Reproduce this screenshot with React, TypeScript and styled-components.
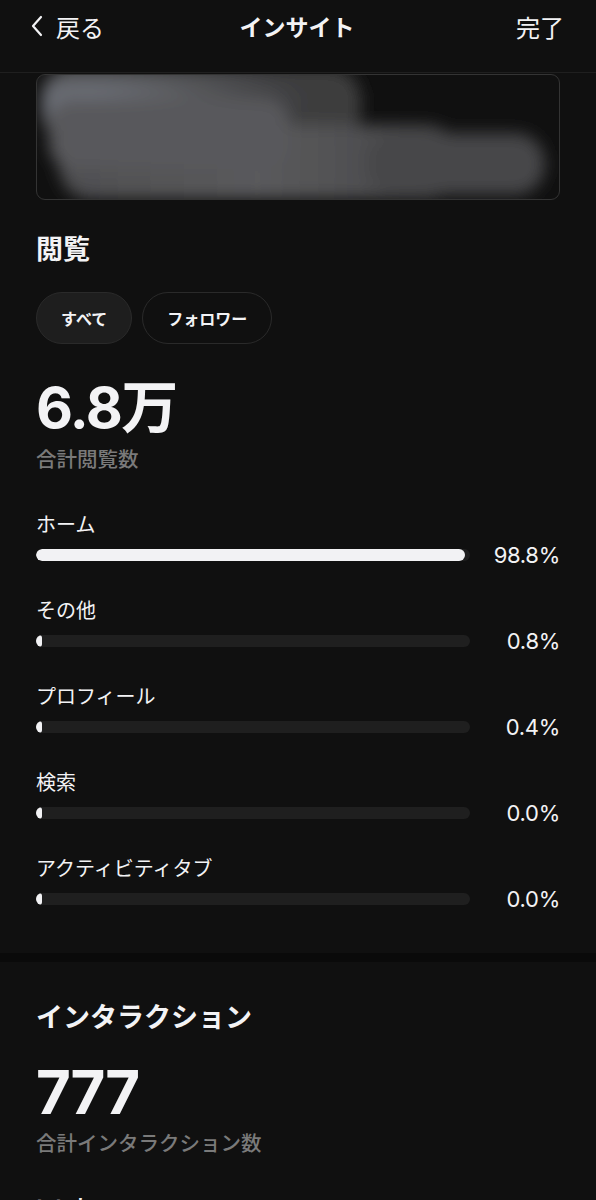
import React from "react";
import styled, { createGlobalStyle } from "styled-components";

const GlobalStyle = createGlobalStyle`
  html, body {
    margin: 0;
    padding: 0;
    background: #101010;
  }
  body {
    font-family: "Noto Sans CJK JP", "Noto Sans", sans-serif;
    color: #f3f3f5;
  }
`;

const Page = styled.div`
  width: 596px;
  height: 1200px;
  overflow: hidden;
  background: #101010;
`;

const Header = styled.header`
  height: 73px;
  display: grid;
  grid-template-columns: 1fr auto 1fr;
  align-items: center;
  padding: 0 32px 0 30px;
  border-bottom: 1px solid #1f1f1f;
  box-sizing: border-box;
  font-size: 23px;
`;

const BackButton = styled.div`
  display: flex;
  align-items: center;
  gap: 12px;
  margin-top: -20px;
  font-size: 24px;
`;

const Title = styled.div`
  font-weight: 700;
  margin-top: -20px;
`;

const Done = styled.div`
  justify-self: end;
  margin-top: -20px;
  font-size: 24px;
`;

const Section = styled.section`
  padding: 0 36px;
`;

const RedactedCard = styled.div`
  margin-top: 1px;
  height: 126px;
  border: 1px solid #343434;
  border-radius: 9px;
  overflow: hidden;
  box-sizing: border-box;
`;

const SectionTitle = styled.h2<{ $top: number }>`
  margin: ${(p) => p.$top}px 0 0;
  font-size: 27px;
  line-height: 36px;
  font-weight: 700;
`;

const Pills = styled.div`
  display: flex;
  gap: 10px;
  margin-top: 26px;
`;

const Pill = styled.div<{ $active?: boolean }>`
  height: 52px;
  padding: 0 24px;
  border-radius: 26px;
  display: flex;
  align-items: center;
  box-sizing: border-box;
  font-size: 16px;
  font-weight: 700;
  background: ${(p) => (p.$active ? "#1e1e1e" : "transparent")};
  border: 1px solid #2a2a2a;
`;

const BigNumber = styled.div<{ $top: number; $size: number }>`
  margin-top: ${(p) => p.$top}px;
  font-family: "Inter", "Noto Sans CJK JP", sans-serif;
  font-size: ${(p) => p.$size}px;
  line-height: 64px;
  font-weight: 700;
  letter-spacing: -1.5px;
`;

const Caption = styled.div`
  margin-top: 4px;
  color: #7a7a7a;
  font-size: 20.5px;
  line-height: 28px;
  font-weight: 500;
`;

const Rows = styled.div`
  margin-top: 40px;
  display: flex;
  flex-direction: column;
  gap: 31px;
`;

const Row = styled.div`
  display: flex;
  flex-direction: column;
  gap: 7px;
`;

const RowLabel = styled.div`
  font-size: 20px;
  line-height: 24px;
`;

const BarLine = styled.div`
  display: flex;
  align-items: center;
  justify-content: space-between;
`;

const Track = styled.div`
  width: 434px;
  height: 12px;
  border-radius: 6px;
  background: #1f1f1f;
  overflow: hidden;
`;

const Fill = styled.div`
  height: 100%;
  min-width: 6px;
  border-radius: 6px;
  background: #f2f2f4;
`;

const Percent = styled.div`
  font-family: "Inter", sans-serif;
  font-size: 22px;
  line-height: 24px;
  letter-spacing: -0.3px;
`;

const Divider = styled.div`
  height: 9px;
  background: #0a0a0a;
  margin-top: 42px;
`;

const SubLabel = styled.div`
  margin-top: 36px;
  font-size: 19px;
  font-weight: 700;
`;

const rows = [
  { label: "ホーム", value: 98.8 },
  { label: "その他", value: 0.8 },
  { label: "プロフィール", value: 0.4 },
  { label: "検索", value: 0.0 },
  { label: "アクティビティタブ", value: 0.0 },
];

function Redaction() {
  return (
    <svg width="524" height="126" viewBox="0 0 524 126">
      <defs>
        <filter id="b" x="-20%" y="-40%" width="140%" height="180%">
          <feGaussianBlur stdDeviation="8" />
        </filter>
        <radialGradient id="g" cx="0.14" cy="0.45" r="0.7">
          <stop offset="0" stopColor="#747882" />
          <stop offset="0.5" stopColor="#58595c" />
          <stop offset="1" stopColor="#3c3c3e" />
        </radialGradient>
        <linearGradient id="h" x1="0" x2="1" y1="0" y2="0">
          <stop offset="0" stopColor="#4e4e50" />
          <stop offset="0.5" stopColor="#5a5a5c" />
          <stop offset="1" stopColor="#444446" />
        </linearGradient>
      </defs>
      <g filter="url(#b)">
        <rect x="4" y="-8" width="320" height="76" rx="32" fill="url(#g)" />
        <rect x="22" y="50" width="400" height="74" rx="32" fill="url(#h)" />
        <rect x="330" y="58" width="178" height="62" rx="30" fill="#47474a" />
        <rect x="12" y="24" width="240" height="70" rx="24" fill="#58595c" />
      </g>
    </svg>
  );
}

export default function App() {
  return (
    <Page>
      <GlobalStyle />
      <Header>
        <BackButton>
          <svg width="14" height="22" viewBox="0 0 14 22">
            <path
              d="M11 2 L3 11 L11 20"
              stroke="#f3f3f5"
              strokeWidth="2.2"
              fill="none"
              strokeLinecap="round"
              strokeLinejoin="round"
            />
          </svg>
          <span>戻る</span>
        </BackButton>
        <Title>インサイト</Title>
        <Done>完了</Done>
      </Header>
      <Section>
        <RedactedCard>
          <Redaction />
        </RedactedCard>
        <SectionTitle $top={30}>閲覧</SectionTitle>
        <Pills>
          <Pill $active>すべて</Pill>
          <Pill>フォロワー</Pill>
        </Pills>
        <BigNumber $top={32} $size={57}>
          6.8万
        </BigNumber>
        <Caption>合計閲覧数</Caption>
        <Rows>
          {rows.map((r) => (
            <Row key={r.label}>
              <RowLabel>{r.label}</RowLabel>
              <BarLine>
                <Track>
                  <Fill style={{ width: `${r.value}%` }} />
                </Track>
                <Percent>{r.value.toFixed(1)}%</Percent>
              </BarLine>
            </Row>
          ))}
        </Rows>
      </Section>
      <Divider />
      <Section>
        <SectionTitle $top={36}>インタラクション</SectionTitle>
        <BigNumber $top={26} $size={60}>
          777
        </BigNumber>
        <Caption>合計インタラクション数</Caption>
        <SubLabel>いいね</SubLabel>
      </Section>
    </Page>
  );
}
